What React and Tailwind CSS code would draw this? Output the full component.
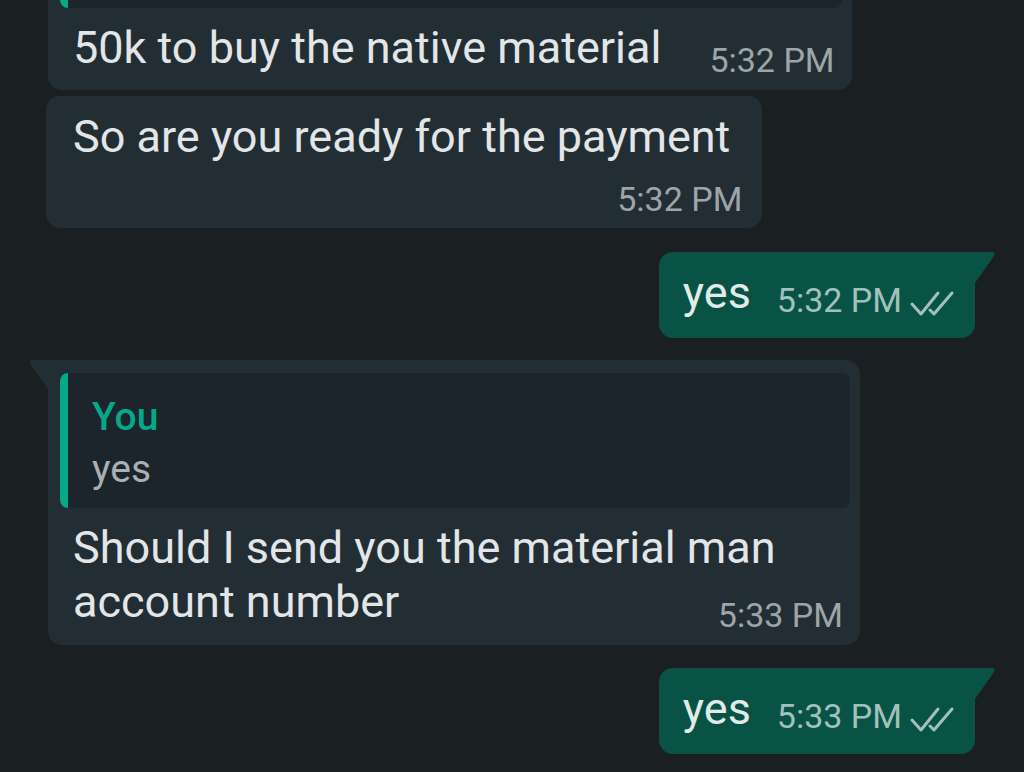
const TEXT = 'text-[45px] leading-[54px] text-[#e3e6e8]';

function Checks() {
  return (
    <svg width="46" height="28" viewBox="0 0 46 28" fill="none" stroke="currentColor" strokeWidth="3" strokeLinecap="round" strokeLinejoin="round" className="ml-[7px] mb-[2px] text-[#a0c2bb]">
      <path d="M3 14 L12 24 L29 3" />
      <path d="M21 20 L25 24 L43 3" />
    </svg>
  );
}

function Outgoing({ text, time, className = '' }) {
  return (
    <div className={`relative mr-[49px] flex items-end self-end rounded-[14px] rounded-tr-none bg-[#085246] pb-[18px] pl-6 pr-5 pt-[14px] ${className}`}>
      <span className="text-[45px] leading-[54px] text-[#e2ebe9]">{text}</span>
      <span className="ml-[26px] text-[34px] leading-[40px] text-[#a0c2bb]">{time}</span>
      <Checks />
      {/* tail */}
      <svg width="21" height="32" viewBox="0 0 21 32" className="absolute left-full top-0">
        <path d="M0 0 H17 Q21 0 19 4 L0 31 Z" fill="#085246" />
      </svg>
    </div>
  );
}

function Quote({ children, className = '' }) {
  return (
    <div className={`mx-3 mr-[10px] flex rounded-[8px] bg-[#1c252b] ${className}`}>
      <div className="w-[8px] shrink-0 rounded-l-[8px] bg-[#06a88a]" />
      {children}
    </div>
  );
}

export default function App() {
  return (
    <div className="flex h-[772px] w-[1024px] flex-col overflow-hidden bg-[#1a1f21] font-[Roboto,sans-serif]">
      {/* bubble scrolled partly off the top */}
      <div className="-mt-[140px] ml-12 w-fit rounded-[14px] bg-[#222d34]">
        <Quote className="mt-[13px] h-[135px]" />
        <div className="flex items-end pb-[10px] pl-[25px] pr-[17px] pt-[13px]">
          <span className={`pb-[5px] ${TEXT}`}>50k to buy the native material</span>
          <span className="ml-[48px] text-[34px] leading-[40px] text-[#9ea5a9]">5:32 PM</span>
        </div>
      </div>

      <div className="ml-[46px] mt-[6px] w-fit rounded-[14px] bg-[#222d34] pb-[9px] pt-[14px]">
        <div className={`pl-[27px] pr-[32px] ${TEXT}`}>So are you ready for the payment</div>
        <div className="mt-[15px] flex justify-end pr-5 text-[34px] leading-[40px] text-[#9ea5a9]">5:32 PM</div>
      </div>

      <Outgoing text="yes" time="5:32 PM" className="mt-6" />

      <div className="relative ml-12 mt-[22px] w-[812px] rounded-[14px] rounded-tl-none bg-[#222d34] pb-[10px]">
        <svg width="19" height="30" viewBox="0 0 19 30" className="absolute right-full top-0">
          <path d="M19 0 H3 Q-1 0 1 4 L19 29 Z" fill="#222d34" />
        </svg>
        <Quote className="mt-[13px]">
          <div className="pb-[13px] pl-6 pt-[18px]">
            <div className="text-[39px] font-medium leading-[52px] text-[#06a88a]">You</div>
            <div className="text-[39px] leading-[52px] text-[#aab0b4]">yes</div>
          </div>
        </Quote>
        <div className="pl-[25px] pr-[17px] pt-[13px]">
          <div className={TEXT}>Should I send you the material man</div>
          <div className="flex items-end justify-between">
            <span className={`pb-[6px] ${TEXT}`}>account number</span>
            <span className="text-[34px] leading-[40px] text-[#9ea5a9]">5:33 PM</span>
          </div>
        </div>
      </div>

      <Outgoing text="yes" time="5:33 PM" className="mt-[23px]" />
    </div>
  );
}
